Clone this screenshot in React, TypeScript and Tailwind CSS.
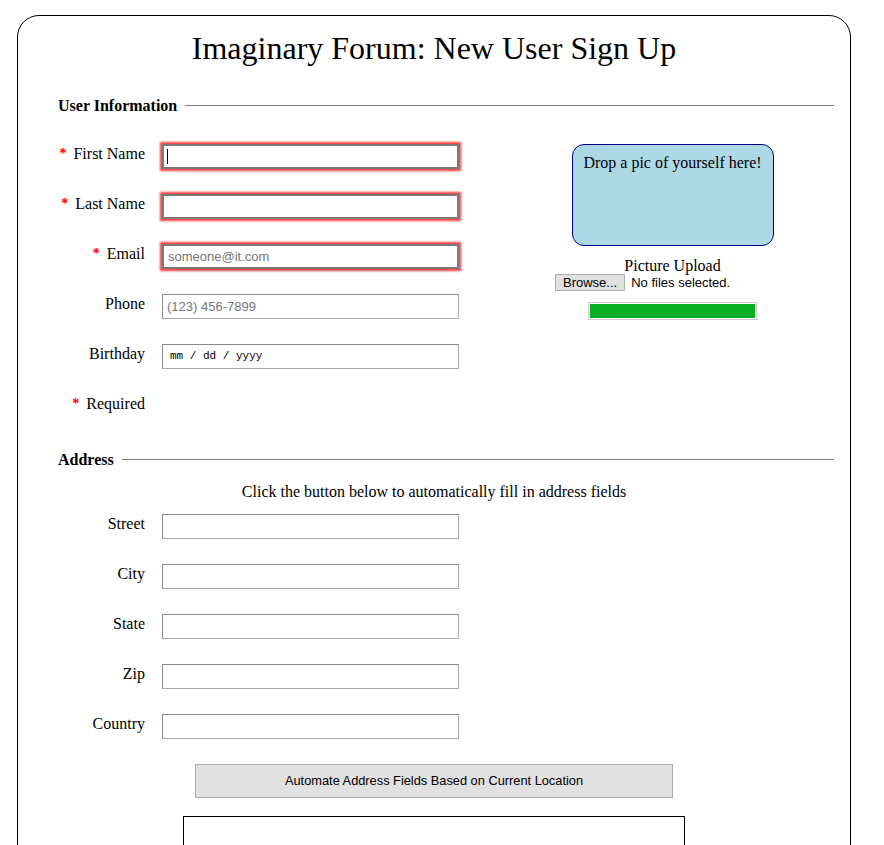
import React from "react";

const userFields = [
  { label: "First Name", required: true, type: "text", placeholder: "", caret: true },
  { label: "Last Name", required: true, type: "text", placeholder: "" },
  { label: "Email", required: true, type: "email", placeholder: "someone@it.com" },
  { label: "Phone", required: false, type: "tel", placeholder: "(123) 456-7899" },
];

const addressFields = ["Street", "City", "State", "Zip", "Country"];

function Legend({ title }: { title: string }) {
  return (
    <div className="flex items-center gap-[8px] ml-[40px] mr-[16px]">
      <span className="font-bold text-[16px] leading-[18px]">{title}</span>
      <div className="flex-1 h-px bg-[#808080] mt-[-1px]" />
    </div>
  );
}

function Star() {
  return <span className="text-[#ff0000] text-[14px] font-bold mr-[7px] relative top-[-1px]">*</span>;
}

function Row({ label, required, children }: { label: React.ReactNode; required?: boolean; children: React.ReactNode }) {
  return (
    <div className="flex items-start h-[50px]">
      <div className="w-[87px] text-right text-[16px] leading-[18px] pt-[1px]">
        {required && <Star />}
        {label}
      </div>
      <div className="ml-[17px]">{children}</div>
    </div>
  );
}

const inputBase =
  "block w-[297px] h-[25px] px-[4px] bg-white border text-[13px] outline-none placeholder:text-[#767676]";

export default function App() {
  return (
    <div className="bg-white min-h-[845px] pt-[15px] font-['Liberation_Serif',serif] text-black">
      <div className="ml-[17px] w-[834px] h-[900px] border border-black rounded-[22px]">
        <h1 className="text-center text-[32px] leading-[37px] pt-[14px]">Imaginary Forum: New User Sign Up</h1>

        <div className="mt-[30px]">
          <Legend title="User Information" />
          <div className="flex ml-[40px] mt-[29px]">
            <div>
              {userFields.map((f) => (
                <Row key={f.label} label={f.label} required={f.required}>
                  <div className="relative">
                    <input
                      type={f.type}
                      placeholder={f.placeholder}
                      className={
                        inputBase +
                        " font-['Liberation_Sans',sans-serif] " +
                        (f.required
                          ? "border-[#7a7a7a] border-2 shadow-[0_0_2px_2px_rgba(255,40,40,0.9)]"
                          : "border-[#a9a9a9] border-t-[#8a8a8a] border-l-[#8a8a8a]")
                      }
                    />
                    {f.caret && <span className="absolute left-[5px] top-[5px] w-px h-[15px] bg-black" />}
                  </div>
                </Row>
              ))}
              <Row label="Birthday">
                <div className="w-[297px] h-[25px] border border-[#a9a9a9] border-t-[#8a8a8a] border-l-[#8a8a8a] px-[7px] flex items-center font-['Liberation_Mono',monospace] text-[11px]">
                  mm / dd / yyyy
                </div>
              </Row>
              <Row label="Required" required>
                <span />
              </Row>
            </div>

            <div className="ml-[96px] w-[235px] flex flex-col items-center">
              <div className="w-[202px] h-[102px] bg-[#add8e6] border border-[#00008b] rounded-[12px] text-center text-[16px] leading-[18px] pt-[9px]">
                Drop a pic of yourself here!
              </div>
              <div className="mt-[11px] text-[16px] leading-[18px]">Picture Upload</div>
              <div className="self-start flex items-center font-['Liberation_Sans',sans-serif] text-[13px] mt-[-2px]">
                <button className="h-[17px] px-[7px] bg-[#e1e1e1] border border-[#adadad] leading-[14px]">Browse...</button>
                <span className="ml-[6px]">No files selected.</span>
              </div>
              <div className="mt-[9px] w-[169px] h-[18px] border border-[#cccccc] p-px">
                <div className="h-full bg-[#06b025]" />
              </div>
            </div>
          </div>
        </div>

        <div className="mt-[7px]">
          <Legend title="Address" />
          <p className="text-center text-[16px] leading-[18px] mt-[14px]">
            Click the button below to automatically fill in address fields
          </p>
          <div className="ml-[40px] mt-[13px]">
            {addressFields.map((a) => (
              <Row key={a} label={a}>
                <input
                  type="text"
                  className={inputBase + " border-[#a9a9a9] border-t-[#8a8a8a] border-l-[#8a8a8a]"}
                />
              </Row>
            ))}
          </div>
          <div className="flex flex-col items-center">
            <button className="w-[478px] h-[34px] bg-[#e1e1e1] border border-[#adadad] font-['Liberation_Sans',sans-serif] text-[12.8px]">
              Automate Address Fields Based on Current Location
            </button>
            <div className="mt-[18px] w-[502px] h-[120px] border border-black" />
          </div>
        </div>
      </div>
    </div>
  );
}
